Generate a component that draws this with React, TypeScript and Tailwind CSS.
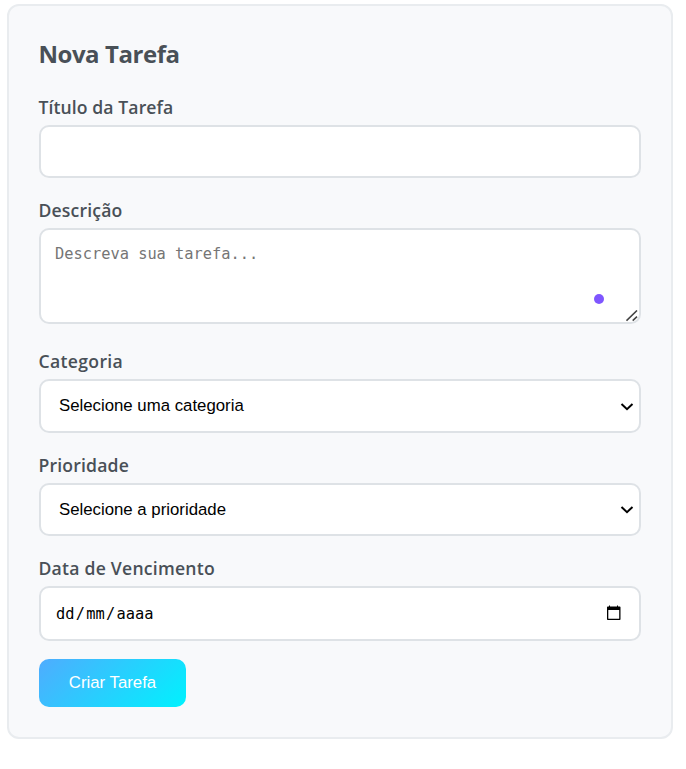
import type { ReactNode } from "react";

const control = "block w-full rounded-[10px] border-2 border-[#dee2e6] bg-white outline-none";

function Field({ label, className, tracking, children }: { label: string; className: string; tracking: string; children: ReactNode }) {
  return (
    <div className={className}>
      <label className={`-ml-[0.6px] block h-[30px] whitespace-nowrap font-['Open_Sans','Noto_Sans',sans-serif] text-[17.6px] leading-[24px] font-semibold text-[#495057] ${tracking}`}>
        {label}
      </label>
      {children}
    </div>
  );
}

function Select({ text, className, arrow }: { text: string; className: string; arrow: string }) {
  return (
    <button type="button" className={`${control} ${className} flex items-center justify-between pr-[5px] pl-[18px] text-left text-[16.8px] text-black`}>
      <span>{text}</span>
      <svg width="14" height="10" viewBox="0 0 14 10" className={arrow} fill="none" stroke="#000" strokeWidth="2">
        <path d="M1.5 2 L7 7.2 L12.5 2" />
      </svg>
    </button>
  );
}

export default function App() {
  return (
    <main className="h-[769px] w-[686px] bg-white pt-1 pl-[7px] font-['Liberation_Sans',Arial,sans-serif]">
      <form className="h-[735px] w-[666px] rounded-[12px] border-2 border-[#e9ecef] bg-[#f8f9fb] px-[30px] pt-[30px]">
        <h2 className="-ml-[0.6px] h-[59px] font-['Open_Sans','Noto_Sans',sans-serif] text-[24px] leading-[36px] font-bold tracking-[-0.44px] whitespace-nowrap text-[#495057]">Nova Tarefa</h2>
        <Field label="Título da Tarefa" className="h-[103px]" tracking="tracking-[0.1px]">
          <input type="text" className={`${control} h-[53px] px-[15px] text-[16.8px]`} />
        </Field>
        <Field label="Descrição" className="h-[151px]" tracking="tracking-[0.18px]">
          <div className="relative">
            <textarea
              placeholder="Descreva sua tarefa..."
              className={`${control} h-24 resize-none px-[14px] py-[14px] font-['DejaVu_Sans_Mono',monospace] text-[15.35px] leading-[20px] placeholder:text-[#757575]`}
            />
            <span className="absolute top-[66px] left-[555px] size-[10px] rounded-full bg-[#7f56ff]" />
            <svg className="absolute right-[3px] bottom-[2px]" width="12" height="12" viewBox="0 0 12 12" stroke="#444" strokeWidth="1.6">
              <path d="M0.5 10.7 L11 0.5 M6.7 10.7 L11 6.7" />
            </svg>
          </div>
        </Field>
        <Field label="Categoria" className="h-[104px]" tracking="tracking-[0.34px]">
          <Select text="Selecione uma categoria" className="h-[54px]" arrow="mt-[2px]" />
        </Field>
        <Field label="Prioridade" className="h-[103px]" tracking="tracking-[0.18px]">
          <Select text="Selecione a prioridade" className="h-[53px]" arrow="mt-0" />
        </Field>
        <Field label="Data de Vencimento" className="h-[103px]" tracking="tracking-[0.24px]">
          <div className={`${control} flex h-[55px] items-center justify-between pr-[17px] pl-[15px] font-['DejaVu_Sans_Mono',monospace] text-[15.35px] text-black`}>
            <span className="mt-[2px] flex gap-[1.25px]">
              <span>dd</span><span>/</span><span>mm</span><span>/</span><span>aaaa</span>
            </span>
            <svg width="16" height="16" viewBox="0 0 16 16" className="mb-[2px]">
              <path fillRule="evenodd" d="M3 .5h1v1h7v-1h1v1h1.7q.8 0 .8.8v11.9q0 .8-.8.8H1.8q-.8 0-.8-.8V2.3q0-.8.8-.8H3z M2.3 5v8.7h10.9V5z" />
            </svg>
          </div>
        </Field>
        <button type="button" className="h-12 w-[147px] rounded-[10px] bg-[linear-gradient(135deg,#4facfe_0%,#00f2fe_100%)] pb-px text-[16.8px] text-white">Criar Tarefa</button>
      </form>
    </main>
  );
}
